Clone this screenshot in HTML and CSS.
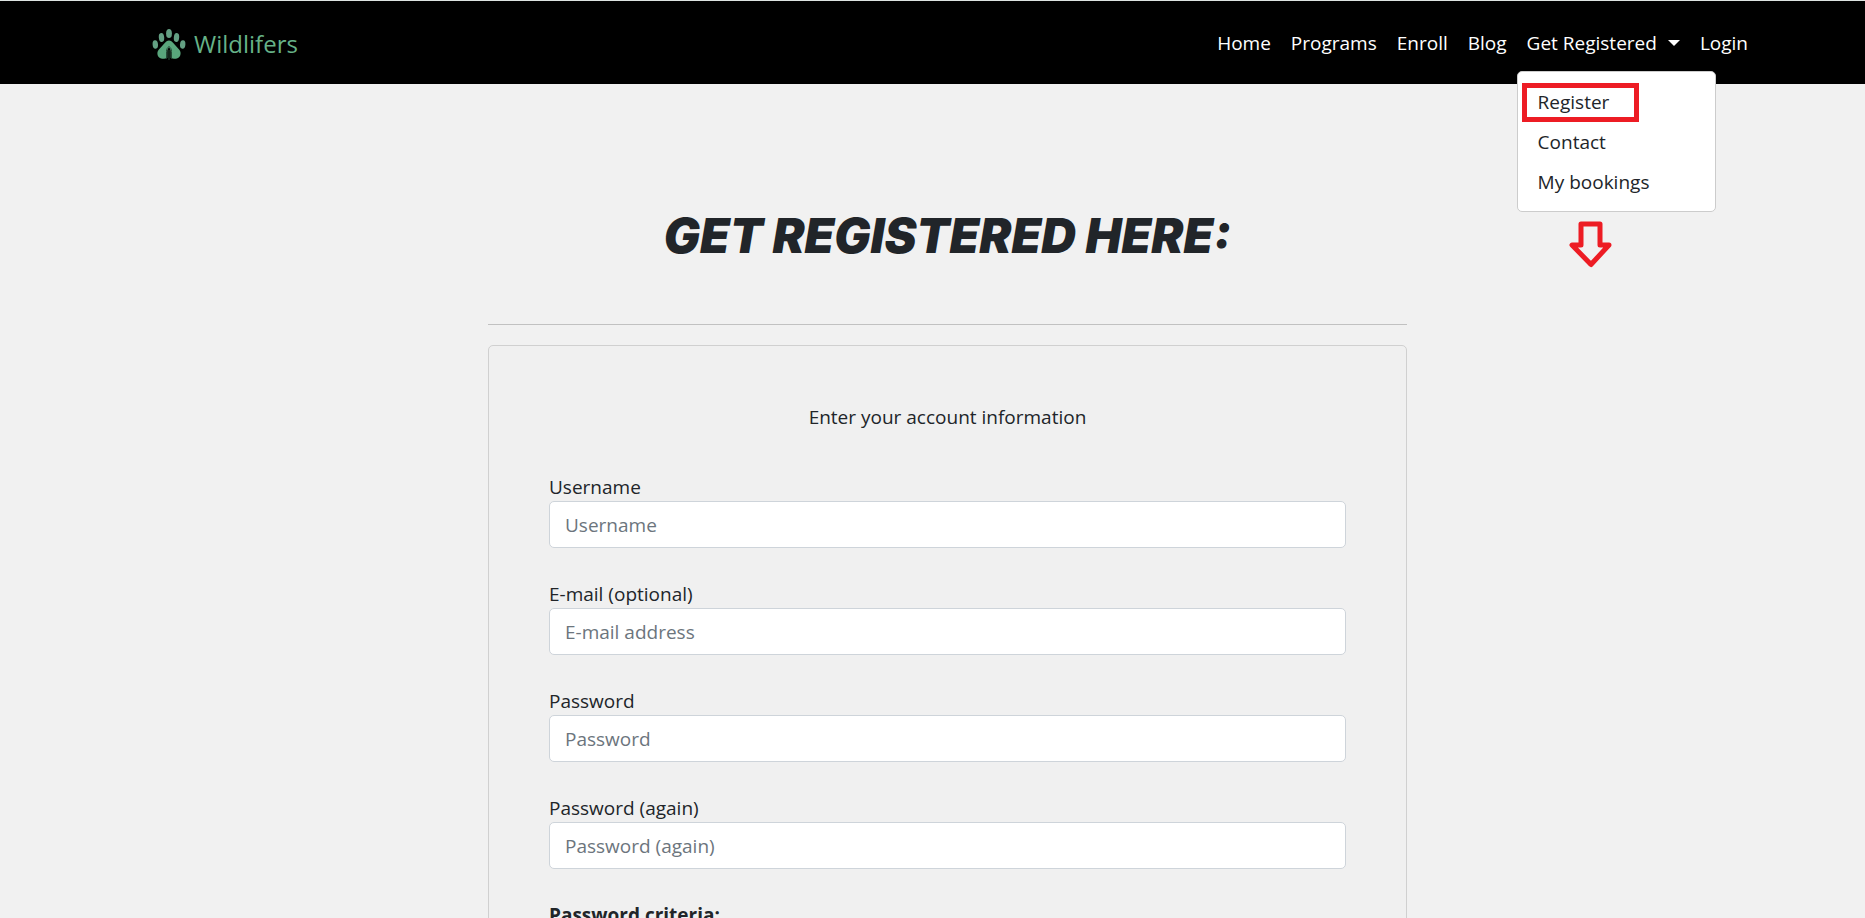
FILE: index.html
```html
<!DOCTYPE html>
<html lang="en">
<head>
  <meta charset="utf-8">
  <title>Wildlifers</title>
  <link rel="stylesheet" href="styles.css">
</head>
<body>
  <header class="navbar">
    <a class="brand" href="#">
      <svg class="brand-logo" viewBox="0 0 34 32" aria-hidden="true">
        <g fill="#63a083">
          <ellipse cx="17" cy="5.500" rx="2.900" ry="4.600"/>
          <ellipse cx="9.500" cy="9.500" rx="2.700" ry="4.500" transform="rotate(-5 9.500 9.500)"/>
          <ellipse cx="24.500" cy="9.500" rx="2.700" ry="4.500" transform="rotate(5 24.500 9.500)"/>
          <ellipse cx="3.300" cy="16.500" rx="2.700" ry="4.200" transform="rotate(-5 3.300 16.500)"/>
          <ellipse cx="30.700" cy="16.500" rx="2.700" ry="4.200" transform="rotate(5 30.700 16.500)"/>
        </g>
        <path fill="#59a67c" d="M17 12.500c2 0 3 1.200 4 2.300l6.300 7c2.600 3 1.200 8.600-3.300 8.900-2.200.2-4-.5-5.300-.7v-6.500c0-1.500-.6-2.900-1.700-3.900-1.100 1-1.700 2.400-1.700 3.900V30c-1.300.2-3.100.9-5.300.7-4.500-.3-5.900-5.900-3.300-8.900l6.300-7c1-1.100 2-2.300 4-2.300z"/>
        <path fill="none" stroke="#264a37" stroke-width="1" d="M17 22v10M14.500 30.500v-7c0-2.500 1-4 2.500-5 1.500 1 2.500 2.500 2.500 5v7"/>
      </svg>
      <span>Wildlifers</span>
    </a>
    <nav class="nav-links">
      <a class="nav-link" href="#">Home</a>
      <a class="nav-link" href="#">Programs</a>
      <a class="nav-link" href="#">Enroll</a>
      <a class="nav-link" href="#">Blog</a>
      <div class="dropdown">
        <button class="nav-link dropdown-toggle" type="button" aria-expanded="true">Get Registered</button>
        <div class="dropdown-menu">
          <a class="dropdown-item" href="#">Register<span class="highlight"></span></a>
          <a class="dropdown-item" href="#">Contact</a>
          <a class="dropdown-item" href="#">My bookings</a>
          <svg class="arrow" viewBox="0 0 44 48" aria-hidden="true">
            <path d="M12 3h19v21h9L22 43.500 3 24h9z" fill="none" stroke="#ed1c24" stroke-width="5" stroke-linejoin="round"/>
          </svg>
        </div>
      </div>
      <a class="nav-link" href="#">Login</a>
    </nav>
  </header>
  <main class="page">
    <h1 class="title">GET REGISTERED HERE:</h1>
    <hr class="rule">
    <form class="card">
      <p class="intro">Enter your account information</p>
      <div class="field">
        <label for="username">Username</label>
        <input id="username" type="text" placeholder="Username">
      </div>
      <div class="field">
        <label for="email">E-mail (optional)</label>
        <input id="email" type="email" placeholder="E-mail address">
      </div>
      <div class="field">
        <label for="password1">Password</label>
        <input id="password1" type="password" placeholder="Password">
      </div>
      <div class="field">
        <label for="password2">Password (again)</label>
        <input id="password2" type="password" placeholder="Password (again)">
      </div>
      <strong class="criteria">Password criteria:</strong>
    </form>
  </main>
</body>
</html>
```
FILE: styles.css
```css
* {
  box-sizing: border-box;
}

body {
  display: flex;
  flex-direction: column;
  height: 100vh;
  margin: 0;
  overflow: hidden;
  background: #f1f1f1;
  color: #212529;
  font: 19px/30px "Open Sans", "Noto Sans", sans-serif;
}

.navbar {
  display: flex;
  flex: none;
  align-items: center;
  justify-content: space-between;
  padding: 15px 107px 15px 152px;
  border-top: 1px solid #dde3e1;
  background: #000;
}

.brand {
  display: flex;
  align-items: center;
  gap: 8px;
  padding-top: 2px;
  color: #66b288;
  font-size: 24px;
  text-decoration: none;
}

.brand-logo {
  width: 34px;
  height: 32px;
}

.nav-links {
  display: flex;
}

.nav-link {
  display: flex;
  align-items: center;
  padding: 12px 10px 11px;
  border: 0;
  background: none;
  color: #fff;
  font: inherit;
  text-decoration: none;
}

.dropdown {
  position: relative;
}

.dropdown-toggle::after {
  margin-left: 11px;
  border: 6px solid transparent;
  border-top-color: #fff;
  border-bottom: 0;
  content: "";
}

.dropdown-menu {
  position: absolute;
  top: 55px;
  left: 0;
  width: 199px;
  padding: 10px 0 9px;
  border: 1px solid #ccc;
  border-radius: 5px;
  background: #fff;
}

.dropdown-item {
  position: relative;
  display: block;
  padding: 5px 20px;
  color: #212529;
  text-decoration: none;
}

.highlight {
  position: absolute;
  top: 1px;
  left: 4px;
  width: 117px;
  height: 39px;
  border: 5px solid #ed1c24;
}

.arrow {
  position: absolute;
  top: 149px;
  left: 51px;
  width: 44px;
  height: 48px;
}

.page {
  flex: none;
  width: 100%;
  max-width: 949px;
  margin: 0 auto;
  padding: 122px 0 0 30px;
}

.title {
  margin: 0;
  font-family: Inter, "Open Sans", sans-serif;
  font-size: 48px;
  font-style: italic;
  font-weight: 900;
  line-height: 60px;
  text-align: center;
  white-space: nowrap;
}

.rule {
  margin: 58px 0 20px;
  border: 0;
  border-top: 1px solid #c1c1c1;
}

.card {
  padding: 56px 60px 60px;
  border: 1px solid #d0d0d0;
  border-radius: 5px;
  background: #f0f0f0;
}

.intro {
  margin: 0 0 41px;
  text-align: center;
}

.field {
  display: flex;
  flex-direction: column;
  margin-bottom: 32px;
  line-height: 28px;
}

.field input {
  width: 100%;
  height: 47px;
  padding: 7px 15px;
  border: 1px solid #ced4da;
  border-radius: 5px;
  background: #fff;
  color: #495057;
  font: inherit;
}

.field input::placeholder {
  color: #6c757d;
  opacity: 1;
}

.criteria {
  display: block;
  line-height: 28px;
}
```
